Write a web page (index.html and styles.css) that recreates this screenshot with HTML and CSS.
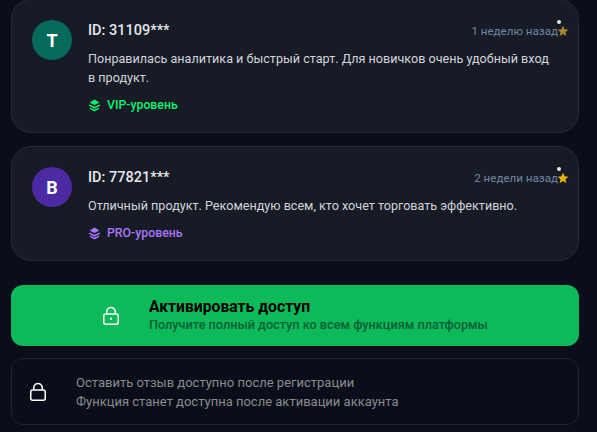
FILE: index.html
```html
<!DOCTYPE html>
<html lang="ru">
<head>
    <meta charset="UTF-8">
    <title>Отзывы</title>
    <link rel="stylesheet" href="styles.css">
</head>
<body>
    <div class="review review-first">
        <div class="avatar avatar-teal">T</div>
        <div class="review-body">
            <div class="review-head">
                <span class="review-id">ID: 31109***</span>
                <span class="review-time">1 неделю назад</span>
            </div>
            <p class="review-text">Понравилась аналитика и быстрый старт. Для новичков очень удобный вход в продукт.</p>
            <div class="tier tier-vip">
                <svg class="tier-icon" viewBox="0 0 24 24"><path d="M12 1 3 6.500 12 11l9-4.500z"/><path d="M2.500 10 12 14.500 21.500 10l1 2.500L12 18 1.500 12.500z"/><path d="M4 16 12 19.500 20 16l1 2-9 5-9-5z"/></svg>
                VIP-уровень
            </div>
        </div>
        <span class="dot"></span>
        <svg class="star star-dim" viewBox="0 0 24 24"><path d="m12 1.500 3.200 7 7.600.800-5.700 5.100 1.600 7.500L12 18l-6.700 3.900 1.600-7.500L1.200 9.300l7.600-.800z"/></svg>
    </div>

    <div class="review">
        <div class="avatar avatar-violet">B</div>
        <div class="review-body">
            <div class="review-head">
                <span class="review-id">ID: 77821***</span>
                <span class="review-time">2 недели назад</span>
            </div>
            <p class="review-text">Отличный продукт. Рекомендую всем, кто хочет торговать эффективно.</p>
            <div class="tier tier-pro">
                <svg class="tier-icon" viewBox="0 0 24 24"><path d="M12 1 3 6.500 12 11l9-4.500z"/><path d="M2.500 10 12 14.500 21.500 10l1 2.500L12 18 1.500 12.500z"/><path d="M4 16 12 19.500 20 16l1 2-9 5-9-5z"/></svg>
                PRO-уровень
            </div>
        </div>
        <span class="dot"></span>
        <svg class="star" viewBox="0 0 24 24"><path d="m12 1.500 3.200 7 7.600.800-5.700 5.100 1.600 7.500L12 18l-6.700 3.900 1.600-7.500L1.200 9.300l7.600-.800z"/></svg>
    </div>

    <div class="activate">
        <svg class="lock" viewBox="0 0 16 20"><rect x=".75" y="8" width="14.500" height="10.250" rx="2"/><path d="M3.750 8V5.750a4.250 4.250 0 0 1 8.500 0V8"/><path d="M8 11.500v2.500"/></svg>
        <div class="activate-text">
            <div class="activate-title">Активировать доступ</div>
            <div class="activate-sub">Получите полный доступ ко всем функциям платформы</div>
        </div>
    </div>

    <div class="locked">
        <svg class="lock" viewBox="0 0 16 20"><rect x=".75" y="8" width="14.500" height="10.250" rx="2"/><path d="M3.750 8V5.750a4.250 4.250 0 0 1 8.500 0V8"/></svg>
        <div>
            <div class="locked-line">Оставить отзыв доступно после регистрации</div>
            <div class="locked-line">Функция станет доступна после активации аккаунта</div>
        </div>
    </div>
</body>
</html>
```

FILE: styles.css
```css
html, body {
    height: 432px;
    overflow: hidden;
}
body {
    margin: 0;
    padding: 0 18px 0 11px;
    background-color: #0a0e1a;
    font-family: Roboto, sans-serif;
}
.review {
    position: relative;
    display: flex;
    gap: 16px;
    padding: 20px 20px 19px;
    margin-bottom: 13px;
    background-color: #171b26;
    border: 1px solid #252a38;
    border-radius: 20px;
}
.review-first {
    margin-top: -1px;
}
.avatar {
    flex: none;
    width: 40px;
    height: 40px;
    border-radius: 50%;
    display: flex;
    align-items: center;
    justify-content: center;
    color: #fff;
    font-size: 18px;
    font-weight: 700;
}
.avatar-teal {
    background-color: #046a5c;
}
.avatar-violet {
    background-color: #4c2aa3;
}
.review-body {
    flex: 1;
}
.review-head {
    display: flex;
    justify-content: space-between;
    align-items: center;
    height: 21px;
}
.review-id {
    color: #e5e7eb;
    font-size: 14.500px;
    font-weight: 500;
}
.review-time {
    color: #6f86a3;
    font-size: 11.600px;
}
.review-text {
    margin: 8px 0 0;
    color: #d1d5db;
    font-size: 12.600px;
    line-height: 19px;
}
.tier {
    display: flex;
    align-items: center;
    gap: 6px;
    margin-top: 10px;
    font-size: 12.300px;
    font-weight: 500;
    line-height: 16px;
}
.tier-icon {
    width: 13px;
    height: 13px;
    fill: currentColor;
}
.tier-vip {
    color: #0cf070;
}
.tier-pro {
    color: #a875fa;
}
.dot {
    position: absolute;
    top: 20px;
    right: 17px;
    width: 4px;
    height: 4px;
    border-radius: 50%;
    background-color: #e5e7eb;
}
.star {
    position: absolute;
    top: 25px;
    right: 9px;
    width: 12px;
    height: 12px;
    fill: #eab308;
}
.star-dim {
    fill: #a8842a;
}
.activate {
    display: flex;
    align-items: center;
    gap: 30px;
    height: 61px;
    margin-top: 24px;
    padding-left: 92px;
    background-color: #0cba5a;
    border-radius: 12px;
}
.activate-text {
    padding-bottom: 3px;
}
.activate-title {
    color: #000;
    font-size: 15.700px;
    font-weight: 700;
}
.activate-sub {
    margin-top: 1px;
    color: #065f35;
    font-size: 12.700px;
    font-weight: 500;
}
.locked {
    display: flex;
    align-items: center;
    gap: 30px;
    height: 65px;
    margin-top: 12px;
    padding-left: 18px;
    border: 1px solid #1e2330;
    border-radius: 12px;
}
.lock {
    flex: none;
    width: 16px;
    height: 20px;
    fill: none;
    stroke: #fff;
    stroke-width: 1.500;
}
.locked-line {
    color: #8b8b8b;
    font-size: 13px;
    line-height: 19px;
}
```
